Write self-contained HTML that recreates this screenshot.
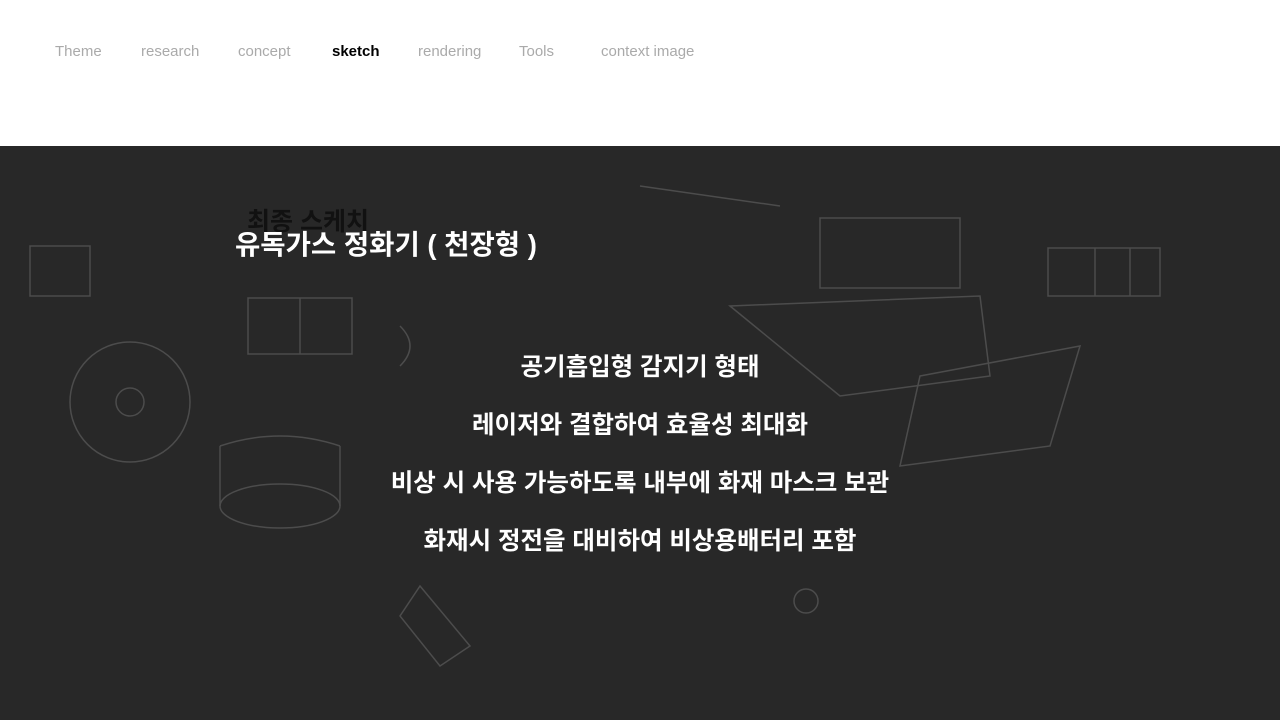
<!DOCTYPE html>
<html><head><meta charset="utf-8"><style>
*{margin:0;padding:0;box-sizing:border-box}
body{width:1280px;height:720px;overflow:hidden;background:#fff;font-family:"Liberation Sans","Noto Sans CJK KR",sans-serif;position:relative}
.nav a{position:absolute;top:43px;font-size:15px;color:#aaa;text-decoration:none}
.nav a.on{color:#000;font-weight:bold}
.bg{position:absolute;left:0;top:146px;width:1280px;height:574px;background:#282828}
.t1{position:absolute;left:247px;top:202px;font-size:25px;font-weight:bold;color:#111}
.t2{position:absolute;left:235px;top:222px;font-size:27.5px;font-weight:bold;color:#fff}
.c{position:absolute;left:0;width:1280px;text-align:center;font-size:24.5px;font-weight:bold;color:#fff}
</style></head><body>
<div class="nav">
<a style="left:55px">Theme</a><a style="left:141px">research</a><a style="left:238px">concept</a><a class="on" style="left:332px">sketch</a><a style="left:418px">rendering</a><a style="left:519px">Tools</a><a style="left:601px">context image</a>
</div>
<div class="bg"></div>
<svg style="position:absolute;left:0;top:146px" width="1280" height="574" fill="none" stroke="#555" stroke-width="1.5" opacity="0.8">
<circle cx="130" cy="256" r="60"/><circle cx="130" cy="256" r="14"/>
<ellipse cx="280" cy="360" rx="60" ry="22"/><path d="M220 300 L220 360 M340 300 L340 360 M220 300 Q280 280 340 300"/>
<rect x="248" y="152" width="104" height="56"/><path d="M300 152 V208"/>
<rect x="1048" y="102" width="112" height="48"/><path d="M1095 102V150M1130 102V150"/>
<rect x="820" y="72" width="140" height="70"/>
<path d="M730 160 L980 150 L990 230 L840 250 Z M920 230 L1080 200 L1050 300 L900 320 Z"/>
<path d="M30 100 H90 V150 H30Z M640 40 L780 60 M420 440 L470 500 L440 520 L400 470Z"/>
<circle cx="806" cy="455" r="12"/><path d="M400 180 Q420 200 400 220"/>
</svg>
<div class="t1">최종 스케치</div>
<div class="t2">유독가스 정화기 ( 천장형 )</div>
<div class="c" style="top:348px">공기흡입형 감지기 형태</div>
<div class="c" style="top:406px">레이저와 결합하여 효율성 최대화</div>
<div class="c" style="top:464px">비상 시 사용 가능하도록 내부에 화재 마스크 보관</div>
<div class="c" style="top:522px">화재시 정전을 대비하여 비상용배터리 포함</div>
</body></html>
